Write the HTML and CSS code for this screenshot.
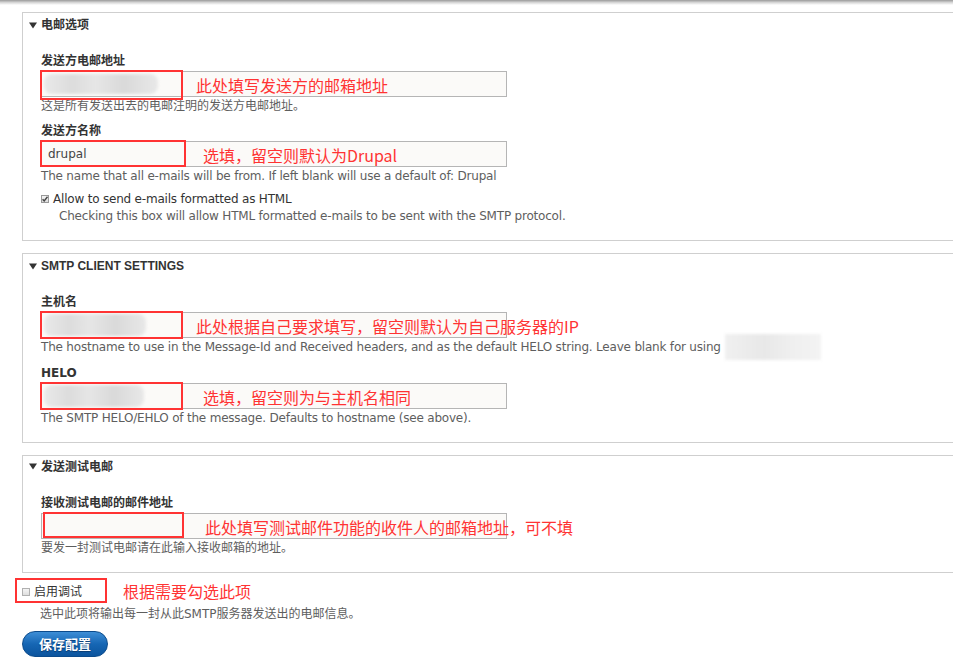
FILE: index.html
```html
<!DOCTYPE html>
<html lang="zh-CN">
<head>
<meta charset="utf-8">
<title>SMTP 设置</title>
<link rel="stylesheet" href="styles.css">
</head>
<body>
<div class="topbar"></div>
<div class="page">

  <div class="fs">
    <div class="fs-head"><svg class="tri" width="8" height="7" viewBox="0 0 8 7"><path d="M0 0.5H8L4 6.5Z" fill="#333"/></svg>电邮选项</div>
    <div class="fs-body">
      <div class="item">
        <div class="label">发送方电邮地址</div>
        <div class="field">
          <input class="input" type="text" value="">
          <span class="blur blur-1"></span>
          <span class="mark mark-tall"></span>
          <span class="note">此处填写发送方的邮箱地址</span>
        </div>
        <div class="desc">这是所有发送出去的电邮注明的发送方电邮地址。</div>
      </div>
      <div class="item">
        <div class="label">发送方名称</div>
        <div class="field">
          <input class="input" type="text" value="drupal">
          <span class="mark mark-wide"></span>
          <span class="note note-b">选填，留空则默认为Drupal</span>
        </div>
        <div class="desc en">The name that all e-mails will be from. If left blank will use a default of: Drupal</div>
      </div>
      <div class="check-item">
        <div class="check-row en"><span class="cb cb-on"><svg width="8" height="8" viewBox="0 0 8 8"><path d="M1.6 4.2L3.2 5.9L6.5 1.8" fill="none" stroke="#444" stroke-width="1.4"/></svg></span>Allow to send e-mails formatted as HTML</div>
        <div class="check-desc en">Checking this box will allow HTML formatted e-mails to be sent with the SMTP protocol.</div>
      </div>
    </div>
  </div>

  <div class="fs">
    <div class="fs-head"><svg class="tri" width="8" height="7" viewBox="0 0 8 7"><path d="M0 0.5H8L4 6.5Z" fill="#333"/></svg>SMTP CLIENT SETTINGS</div>
    <div class="fs-body">
      <div class="item">
        <div class="label">主机名</div>
        <div class="field">
          <input class="input" type="text" value="">
          <span class="blur blur-2"></span>
          <span class="mark"></span>
          <span class="note">此处根据自己要求填写，留空则默认为自己服务器的IP</span>
        </div>
        <div class="desc en">The hostname to use in the Message-Id and Received headers, and as the default HELO string. Leave blank for using<span class="blur-inline"></span></div>
      </div>
      <div class="item">
        <div class="label">HELO</div>
        <div class="field">
          <input class="input" type="text" value="">
          <span class="blur blur-3"></span>
          <span class="mark"></span>
          <span class="note note-b">选填，留空则为与主机名相同</span>
        </div>
        <div class="desc en">The SMTP HELO/EHLO of the message. Defaults to hostname (see above).</div>
      </div>
    </div>
  </div>

  <div class="fs">
    <div class="fs-head fs-head-tight"><svg class="tri" width="8" height="7" viewBox="0 0 8 7"><path d="M0 0.5H8L4 6.5Z" fill="#333"/></svg>发送测试电邮</div>
    <div class="fs-body">
      <div class="item">
        <div class="label">接收测试电邮的邮件地址</div>
        <div class="field">
          <input class="input" type="text" value="">
          <span class="mark mark-shift"></span>
          <span class="note note-c">此处填写测试邮件功能的收件人的邮箱地址，可不填</span>
        </div>
        <div class="desc">要发一封测试电邮请在此输入接收邮箱的地址。</div>
      </div>
    </div>
  </div>

  <div class="debug">
    <div class="check-row debug-row"><span class="cb"></span>启用调试
      <span class="mark mark-debug"></span>
      <span class="note note-debug">根据需要勾选此项</span>
    </div>
    <div class="check-desc">选中此项将输出每一封从此SMTP服务器发送出的电邮信息。</div>
  </div>

  <button class="btn" type="button">保存配置</button>
</div>
</body>
</html>
```

FILE: styles.css
```css
html, body {
  margin: 0;
  padding: 0;
  background: #fff;
  overflow: hidden;
}
body {
  font-family: "DejaVu Sans", "Noto Sans CJK SC", sans-serif;
  font-size: 12px;
  color: #333;
  width: 953px;
  height: 665px;
}
.topbar {
  height: 5px;
  background: linear-gradient(#9a9a9a, #d6d6d6 50%, #fff);
}
.page {
  padding: 7px 0 0 22px;
}
.fs {
  width: 1000px;
  border: 1px solid #cfcfcf;
  margin-bottom: 12px;
}
.fs-head {
  padding: 4px 0 0 6px;
  line-height: 16px;
  font-family: "Liberation Sans", "Noto Sans CJK SC", sans-serif;
  font-weight: bold;
  color: #333;
  display: flex;
  align-items: center;
}
.fs-head-tight {
  padding-top: 3px;
}
.tri {
  margin-right: 4px;
  flex: none;
}
.fs-body {
  padding: 20px 0 16px 18px;
}
.item + .item {
  margin-top: 9px;
}
.label {
  font-weight: bold;
  line-height: 16px;
  color: #333;
}
.field {
  position: relative;
  width: 466px;
  height: 26px;
  margin-top: 2px;
}
.input {
  display: block;
  box-sizing: border-box;
  width: 466px;
  height: 26px;
  margin: 0;
  padding: 0 6px;
  border: 1px solid #b5b5b5;
  background: #fbfaf8;
  font-family: "DejaVu Sans", sans-serif;
  font-size: 12px;
  color: #444;
  outline: none;
}
.desc {
  margin-top: 1px;
  line-height: 16px;
  color: #5e5e5e;
  white-space: nowrap;
}
.en {
  letter-spacing: -0.2px;
}
.blur {
  position: absolute;
  display: block;
  background: linear-gradient(90deg, #e9e9e9 0%, #dcdcdc 25%, #e6e6e6 45%, #d9d9d9 70%, #e8e8e8 100%);
  filter: blur(1.5px);
  border-radius: 8px;
}
.blur-1 { left: 3px; top: 3px; width: 114px; height: 20px; }
.blur-2 { left: 3px; top: 2px; width: 102px; height: 22px; }
.blur-3 { left: 3px; top: 2px; width: 100px; height: 22px; }
.blur-inline {
  display: inline-block;
  width: 96px;
  height: 26px;
  margin: -6px 0 -4px 4px;
  vertical-align: middle;
  background: linear-gradient(90deg, #f0f0f0, #e8e8e8 40%, #efefef 70%, #f3f3f3);
  filter: blur(1.5px);
}
.mark {
  position: absolute;
  left: -1px;
  top: -1px;
  width: 143px;
  height: 28px;
  box-sizing: border-box;
  border: 2px solid #ff3333;
}
.mark-tall { top: -1px; height: 30px; width: 143px; }
.mark-wide { width: 146px; height: 27px; }
.mark-shift { left: 2px; width: 141px; height: 26px; }
.note {
  position: absolute;
  left: 155px;
  top: 1px;
  line-height: 26px;
  font-family: "Noto Sans CJK SC", sans-serif;
  font-size: 16px;
  color: #ff3333;
  white-space: nowrap;
}
.note-b { left: 162px; }
.note-c { left: 164px; }

.check-item {
  margin-top: 7px;
}
.check-row {
  display: flex;
  align-items: center;
  line-height: 16px;
  color: #333;
}
.cb {
  flex: none;
  box-sizing: border-box;
  width: 8px;
  height: 8px;
  margin-right: 4px;
  border: 1px solid #b0b0b0;
  background: linear-gradient(#f4f4f4, #dedede);
  display: flex;
}
.cb svg { display: block; margin: -1px; }
.cb-on { border-color: #999; }
.check-desc {
  margin-top: 1px;
  padding-left: 18px;
  line-height: 16px;
  color: #5e5e5e;
  white-space: nowrap;
}
.debug {
  margin-top: -1px;
}
.debug-row {
  position: relative;
  margin-top: 11px;
}
.mark-debug {
  left: -7px;
  top: -6px;
  width: 92px;
  height: 25px;
}
.note-debug {
  left: 101px;
  top: -6px;
}
.debug .check-desc {
  margin-top: 6px;
}
.btn {
  display: block;
  margin-top: 9px;
  width: 86px;
  height: 26px;
  padding: 0;
  border: 1px solid #0b4b8c;
  border-radius: 13px;
  background: linear-gradient(#3d8ed6, #1666b4 50%, #0b549e);
  color: #fff;
  font-family: "Noto Sans CJK SC", sans-serif;
  font-size: 13px;
  font-weight: bold;
  line-height: 24px;
  text-shadow: 0 1px 1px #0a3a6e;
}
```
